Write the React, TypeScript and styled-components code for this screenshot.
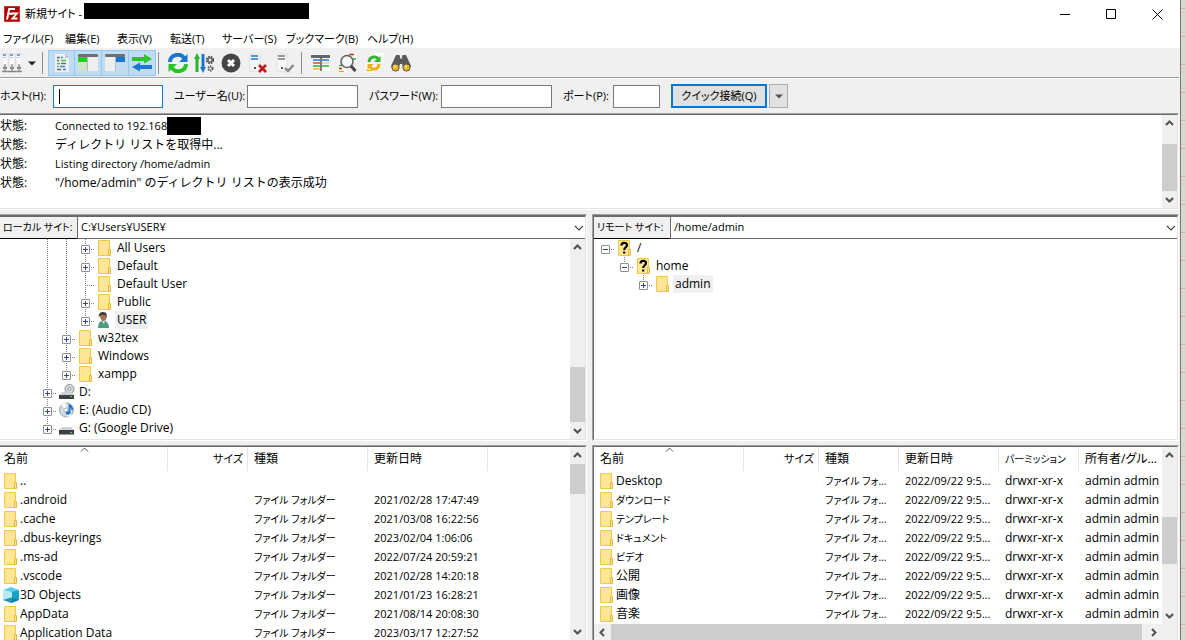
import React from "react";
import styled, { createGlobalStyle, css } from "styled-components";

const GlobalStyle = createGlobalStyle`
  *, *::before, *::after { box-sizing: border-box; }
  body { margin: 0; background: #dad7ce; }
  button, input, select { font: inherit; color: inherit; margin: 0; }
`;

const Desktop = styled.div`
  display: flex;
  height: 100vh;
  overflow: hidden;
  font-family: "Open Sans", "Noto Sans CJK JP", sans-serif;
  font-size: 12px;
  line-height: 18px;
  color: #000;
  font-feature-settings: "palt";
`;

const Window = styled.div`
  flex: 1;
  min-width: 0;
  display: flex;
  flex-direction: column;
  padding-right: 1px;
  background: #f0f0f0;
`;

const DesktopEdge = styled.div`
  flex: 0 0 5px;
  border-left: 1px solid #777;
  background: repeating-linear-gradient(to bottom, #dad7ce 0 8px, #c9b8b2 8px 9px, #dad7ce 9px 28px);
`;

const TitleBar = styled.header`
  flex: 0 0 28px;
  display: flex;
  margin-right: -1px;
  background: #fff;
`;

const Title = styled.h1`
  flex: 1;
  display: flex;
  align-items: center;
  margin: 0;
  padding-left: 4px;
  font-size: 11px;
  font-weight: 400;
  white-space: nowrap;
`;

const TitleText = styled.span`
  flex: 0 0 58px;
  margin: 0 1px 0 5px;
`;

const TitleMask = styled.span`
  width: 225px;
  height: 16px;
  margin-bottom: 6px;
  background: #000;
`;

const WindowButton = styled.button`
  width: 46px;
  border: 0;
  padding: 0;
  background: transparent;
  display: grid;
  place-items: center;
`;

const WindowButtons = styled.div`
  display: flex;
`;

const MenuBar = styled.nav`
  flex: 0 0 20px;
  display: flex;
  margin-right: -1px;
  padding-left: 3px;
  background: #fff;
`;

const MenuItem = styled.button<{ $width: number }>`
  width: ${(p) => p.$width}px;
  border: 0;
  padding: 2px 0 0;
  background: transparent;
  text-align: left;
  white-space: nowrap;
  font-size: 11px;
  line-height: 18px;
`;

const ToolBar = styled.div`
  flex: 0 0 31px;
  display: flex;
  align-items: center;
  border-bottom: 1px solid #fff;
  box-shadow: inset 0 -1px #a0a0a0;
`;

const ToolButton = styled.button<{ $on?: boolean; $width?: number }>`
  width: ${(p) => p.$width ?? 27}px;
  height: 26px;
  padding: 0;
  border: 1px solid transparent;
  background: transparent;
  display: grid;
  place-items: center;
  ${(p) =>
    p.$on &&
    css`
      border-color: #90c8f6;
      background: #c0dcf3;
      & + & { border-left-width: 0; }
    `}
`;

const ToolSeparator = styled.span`
  width: 1px;
  height: 22px;
  margin: 0 5px 0 2px;
  background: #8c8c8c;
`;

const QuickConnect = styled.form`
  flex: 0 0 34px;
  display: flex;
  align-items: center;
`;

const FieldLabel = styled.label<{ $width: number }>`
  width: ${(p) => p.$width}px;
  white-space: nowrap;
  font-size: 11px;
`;

const TextField = styled.input<{ $width: number; $active?: boolean }>`
  width: ${(p) => p.$width}px;
  height: 23px;
  margin-right: 11px;
  padding: 0 5px;
  border: 1px solid ${(p) => (p.$active ? "#0078d7" : "#7a7a7a")};
  border-radius: 0;
  outline: 0;
  background: #fff;
  ${(p) =>
    p.$active &&
    css`
      caret-color: transparent;
      background: linear-gradient(#000, #000) 5px 50% / 1px 15px no-repeat #fff;
    `}
`;

const ConnectButton = styled.button`
  width: 96px;
  height: 24px;
  padding: 0;
  border: 2px solid #0078d7;
  background: #e1e1e1;
  font-size: 11px;
  white-space: nowrap;
`;

const HistoryButton = styled.button`
  width: 19px;
  height: 24px;
  margin-left: 2px;
  padding: 0;
  border: 1px solid #adadad;
  background: #e1e1e1;
  display: grid;
  place-items: center;
`;

const Panel = styled.section<{ $inset?: boolean; $open?: boolean }>`
  min-width: 0;
  min-height: 0;
  display: flex;
  flex-direction: column;
  border-top: 1px solid #a0a0a0;
  border-right: 1px solid #fff;
  border-bottom: ${(p) => (p.$open ? "0" : "1px solid #fff")};
  border-left: ${(p) => (p.$inset ? "1px solid #a0a0a0" : "0")};
`;

const PanelInner = styled.div<{ $inset?: boolean; $open?: boolean }>`
  flex: 1;
  min-height: 0;
  display: flex;
  overflow: hidden;
  border-top: 1px solid #696969;
  border-right: 1px solid #e3e3e3;
  border-bottom: ${(p) => (p.$open ? "0" : "1px solid #e3e3e3")};
  border-left: ${(p) => (p.$inset ? "1px solid #696969" : "0")};
  background: #fff;
`;

const LogPanel = styled(Panel)`
  flex: 0 0 97px;
`;

const LogTable = styled.table`
  flex: 1;
  align-self: flex-start;
  margin-top: 1px;
  border-collapse: collapse;
  font-feature-settings: normal;
  th, td { padding: 0; height: 19px; text-align: left; font-weight: 400; white-space: nowrap; }
  th { width: 55px; font-size: 12px; }
`;

const LogText = styled.div<{ $small: boolean }>`
  display: flex;
  align-items: center;
  font-size: ${(p) => (p.$small ? 11 : 12)}px;
`;

const LogMask = styled.span`
  width: 34px;
  height: 18px;
  background: #000;
`;

const Panes = styled.main`
  flex: 1;
  min-height: 0;
  margin-top: 4px;
  display: grid;
  grid-template-columns: minmax(0, 1fr) minmax(0, 1fr);
  grid-template-rows: 227px minmax(0, 1fr);
  gap: 4px 5px;
`;

const PathBar = styled.div<{ $inset?: boolean }>`
  flex: 0 0 24px;
  display: flex;
  border-top: 2px solid #696969;
  border-right: 1px solid #e3e3e3;
  border-left: ${(p) => (p.$inset ? "1px solid #696969" : "0")};
`;

const PathLabel = styled.label<{ $width: number }>`
  flex: 0 0 ${(p) => p.$width}px;
  padding: 1px 0 0 3px;
  border-bottom: 1px solid #000;
  white-space: nowrap;
  font-size: 10px;
`;

const PathBox = styled.div`
  flex: 1;
  position: relative;
  border-left: 1px solid #696969;
  border-bottom: 1px solid #696969;
  background: #fff;
  svg { position: absolute; right: 1px; top: 8px; pointer-events: none; }
`;

const PathSelect = styled.select`
  width: 100%;
  height: 20px;
  padding: 0 20px 0 3px;
  border: 0;
  outline: 0;
  appearance: none;
  background: transparent;
  font-size: 11px;
`;

const TreeInner = styled(PanelInner)`
  border-top: 0;
`;

const Tree = styled.ul<{ $indent: number }>`
  flex: 1;
  margin: 0;
  padding: 0 0 0 ${(p) => p.$indent}px;
  list-style: none;
`;

const TreeRow = styled.li`
  display: flex;
  height: 18px;
`;

const dotsDown = "repeating-linear-gradient(to bottom, #808080 0 1px, transparent 1px 2px)";
const dotsRight = "repeating-linear-gradient(to right, #808080 0 1px, transparent 1px 2px)";

const Guide = styled.span<{ $line: boolean }>`
  width: 19px;
  background: ${(p) => (p.$line ? `${dotsDown} 9px 0 / 1px 100% no-repeat` : "none")};
`;

const Branch = styled.span<{ $rise: string }>`
  width: 19px;
  padding-top: 2px;
  display: grid;
  place-items: center;
  background: ${dotsDown} 9px 0 / 1px ${(p) => p.$rise} no-repeat, ${dotsRight} 9px 10px / 10px 1px no-repeat;
`;

const Expander = styled.button`
  width: 9px;
  height: 9px;
  padding: 0;
  border: 1px solid #8f8f8f;
  border-radius: 1px;
  background: #fff;
  display: grid;
  place-items: center;
`;

const TreeIcon = styled.span`
  width: 20px;
  padding: 1px 0 0 2px;
  line-height: 0;
`;

const TreeLabel = styled.span<{ $selected?: boolean }>`
  padding: 0 2px;
  white-space: nowrap;
  background: ${(p) => (p.$selected ? "#f0f0f0" : "transparent")};
`;

const ListColumn = styled.div`
  flex: 1;
  min-width: 0;
  display: flex;
  flex-direction: column;
`;

const ListTop = styled.div`
  flex: 1;
  min-height: 0;
  display: flex;
`;

const ListArea = styled.div`
  flex: 1;
  min-width: 0;
  overflow: hidden;
`;

const FileTable = styled.table`
  width: 0;
  table-layout: fixed;
  border-collapse: separate;
  border-spacing: 0;
`;

const HeadCell = styled.th<{ $right?: boolean; $pad: number; $size: number }>`
  position: relative;
  height: 24px;
  padding: 0 4px 0 ${(p) => p.$pad}px;
  border-right: 1px solid #e5e5e5;
  font-size: ${(p) => p.$size}px;
  font-weight: 400;
  white-space: nowrap;
  text-align: ${(p) => (p.$right ? "right" : "left")};
  svg { position: absolute; top: 0; left: 50%; margin-left: -4px; }
`;

const Cell = styled.td<{ $pad: number; $size: number }>`
  height: 19px;
  padding: 0 0 0 ${(p) => p.$pad}px;
  white-space: nowrap;
  font-size: ${(p) => p.$size}px;
  line-height: 14px;
`;

const FileName = styled.span`
  display: flex;
  align-items: center;
  height: 19px;
  svg { flex: none; margin-right: 1px; }
`;

const Bar = styled.div<{ $horizontal?: boolean }>`
  flex: 0 0 ${(p) => (p.$horizontal ? 16 : 15)}px;
  display: flex;
  flex-direction: ${(p) => (p.$horizontal ? "row" : "column")};
  background: #f0f0f0;
`;

const BarButton = styled.button`
  flex: 0 0 17px;
  padding: 0;
  border: 0;
  background: transparent;
  display: grid;
  place-items: center;
`;

const BarPart = styled.span<{ $grow: number; $thumb?: boolean }>`
  flex: ${(p) => p.$grow} 1 0;
  background: ${(p) => (p.$thumb ? "#cdcdcd" : "transparent")};
`;

const BarCorner = styled.div`
  display: flex;
  padding-right: 15px;
  background: #f0f0f0;
  > div { flex: 1; height: 16px; }
`;

const arrowPaths = {
  up: "M1 6 L4.500 2.500 L8 6",
  down: "M1 3 L4.500 6.500 L8 3",
  left: "M6 1 L2.500 4.500 L6 8",
  right: "M3 1 L6.500 4.500 L3 8",
};

const Arrow = ({ dir }: { dir: keyof typeof arrowPaths }) => (
  <svg width="9" height="9" viewBox="0 0 9 9">
    <path d={arrowPaths[dir]} fill="none" stroke="#505050" strokeWidth="2" />
  </svg>
);

function ScrollBar({ parts, horizontal }: { parts: [number, number, number]; horizontal?: boolean }) {
  return (
    <Bar $horizontal={horizontal}>
      <BarButton type="button" aria-label={horizontal ? "左へ" : "上へ"}>
        <Arrow dir={horizontal ? "left" : "up"} />
      </BarButton>
      <BarPart $grow={parts[0]} />
      <BarPart $grow={parts[1]} $thumb />
      <BarPart $grow={parts[2]} />
      <BarButton type="button" aria-label={horizontal ? "右へ" : "下へ"}>
        <Arrow dir={horizontal ? "right" : "down"} />
      </BarButton>
    </Bar>
  );
}

const Caret = ({ color = "#222" }: { color?: string }) => (
  <svg width="8" height="5" viewBox="0 0 8 5">
    <path d="M0 0.500 H8 L4 4.500 Z" fill={color} />
  </svg>
);

const Chevron = () => (
  <svg width="10" height="6" viewBox="0 0 10 6">
    <path d="M1 1 L5 5 L9 1" fill="none" stroke="#444" strokeWidth="1.100" />
  </svg>
);

const SortMark = () => (
  <svg width="9" height="5" viewBox="0 0 9 5">
    <path d="M1 4.500 L4.500 1 L8 4.500" fill="none" stroke="#555" />
  </svg>
);

type IconName = "folder" | "unknown" | "user" | "cd" | "drive" | "optical" | "cube";

function ItemIcon({ name }: { name: IconName }) {
  return (
    <svg width="16" height="16" viewBox="0 0 16 16">
      {(name === "folder" || name === "unknown") && (
        <>
          <path d="M1.500 .5 H12.500 V15.500 H1.500 Z" fill="#ffe694" stroke="#efc94f" />
          <path d="M11.500 9.500 H13.500 V15.500 H11.500 Z" fill="#ffe694" stroke="#e3b93c" />
        </>
      )}
      {name === "unknown" && (
        <path d="M4.500 5.500 C4.500 2 10 2 10 5 C10 7.500 7.200 7 7.200 10 M7.200 11.500 V13.500" fill="none" stroke="#000" strokeWidth="2.200" />
      )}
      {name === "user" && (
        <>
          <path d="M1 16 C1 11 3 9 6 8.500 C10 9 12 12 12 16 Z" fill="#4d9c80" />
          <path d="M5 9 L7 12 L8 8 Z" fill="#e7f3ee" />
          <path d="M3 3 C3 7 5 9 6.500 9 C9 9 10 6 9.500 3 Z" fill="#a5734f" />
          <path d="M2 5 C1 1 4 0 6 0 C10 0 10 3 9.500 5 L8 3 L4 3 Z" fill="#45403c" />
        </>
      )}
      {name === "optical" && (
        <>
          <circle cx="10.500" cy="5" r="4.500" fill="#d6d9dc" stroke="#8b8f94" />
          <circle cx="10.500" cy="5" r="1.500" fill="#fff" stroke="#8b8f94" />
          <path d="M3 8 H12 L15 11 H0 Z" fill="#cfd2d4" />
          <path d="M0 11 H15 V15 H0 Z" fill="#3c4044" />
          <path d="M11 12.500 H13" stroke="#46e05a" />
        </>
      )}
      {name === "drive" && (
        <>
          <path d="M3 7 H12 L15 10 H0 Z" fill="#cfd2d4" />
          <path d="M0 10 H15 V14.500 H0 Z" fill="#3c4044" />
          <path d="M11 12.500 H13" stroke="#46e05a" />
        </>
      )}
      {name === "cd" && (
        <>
          <circle cx="7.500" cy="8" r="7" fill="#d3dae0" stroke="#9aa3ab" />
          <path d="M7.500 8 L2 3 A7.500 7.500 0 0 1 7 .8 Z M7.500 8 L13 13 A7 7 0 0 1 8 15 Z" fill="#f6f9fb" />
          <circle cx="7" cy="8" r="2" fill="#fff" stroke="#a9b2ba" />
          <path d="M10.500 11 V2.500 C11 4.500 14 5 13 8" fill="none" stroke="#1b74c5" strokeWidth="1.800" />
          <ellipse cx="9" cy="11" rx="2.500" ry="1.800" fill="#1b74c5" />
        </>
      )}
      {name === "cube" && (
        <>
          <path d="M0 3 L8 0 L16 3 L9 5.500 Z" fill="#58cfe6" />
          <path d="M0 3 L9 5 V16 L0 13 Z" fill="#b5ecf4" />
          <path d="M9 5 L16 3 V13 L9 16 Z" fill="#12a2c6" />
          <path d="M0 13 L8 10.500 L16 13 L8 16 Z" fill="#087c9d" opacity=".8" />
        </>
      )}
    </svg>
  );
}

const AppLogo = () => (
  <svg width="16" height="16" viewBox="0 0 16 16">
    <rect width="16" height="16" fill="#b30000" />
    <rect x=".5" y=".5" width="15" height="15" fill="none" stroke="#d66" strokeDasharray="1 1" />
    <path d="M3 13.500 L5.200 3 H11 M4 7.800 H8.500" fill="none" stroke="#fff" strokeWidth="2" />
    <path d="M8 7.500 H13 L8.500 12.500 H13.500" fill="none" stroke="#fff" strokeWidth="1.800" />
  </svg>
);

const toolArt: Record<string, React.ReactNode> = {
  sites: (
    <>
      {[0, 7, 14].map((x) => (
        <g key={x}>
          <path d={`M${x} 1 H${x + 6} V13 H${x} Z`} fill="#fafafa" stroke="#ccc" strokeWidth=".6" />
          <path d={`M${x + 1} 2 H${x + 4}`} stroke="#4c93d9" strokeWidth="1.600" />
          <path d={`M${x + 1} 4.500 H${x + 4}`} stroke="#a9cdf0" />
          <path d={`M${x + 3} 11 V18`} stroke="#999" strokeWidth="1.500" />
          <path d={`M${x + 1} 15 H${x + 5}`} stroke="#888" strokeWidth="2" />
        </g>
      ))}
      <path d="M0 18.500 H20" stroke="#888" strokeWidth="1.500" />
    </>
  ),
  log: (
    <>
      <path d="M3 1 H13 L17 5 V19 H3 Z" fill="#eef1f3" />
      <path d="M13 1 V5 H17 Z" fill="#b9c4cc" />
      <path d="M5 4.500 H8 M5 7.500 H7 M5 16.500 H9" stroke="#666" strokeWidth="1.400" />
      <path d="M9 4.500 H11 M8 13.500 H13 M11 16.500 H14" stroke="#3c86d0" strokeWidth="1.400" />
      <path d="M9 7.500 H14 M5 10.500 H8 M5 13.500 H7" stroke="#50bb50" strokeWidth="1.400" />
      <path d="M9 10.500 H14" stroke="#666" strokeWidth="1.400" />
    </>
  ),
  localTree: (
    <>
      <rect y="2" width="20" height="16" fill="#eee" />
      <rect y="1" width="20" height="3" rx="1" fill="#707070" />
      <rect y="4" width="9" height="5" fill="#2c2" />
      <rect y="9" width="9" height="9" fill="#cde5c9" />
      <path d="M9.500 4 V18" stroke="#bbb" />
    </>
  ),
  remoteTree: (
    <>
      <rect y="2" width="20" height="16" fill="#eee" />
      <rect y="1" width="20" height="3" rx="1" fill="#707070" />
      <rect x="11" y="4" width="9" height="5" fill="#1976d2" />
      <rect x="11" y="9" width="9" height="9" fill="#c5dcf0" />
      <path d="M10.500 4 V18" stroke="#bbb" />
    </>
  ),
  queue: (
    <>
      <path d="M0 4 H12 V1 L20 6 L12 10.500 V8 H0 Z" fill="#29c429" />
      <path d="M20 12 H8 V9.500 L0 14 L8 18.500 V16 H20 Z" fill="#1b76d0" />
    </>
  ),
  refresh: (
    <>
      <path d="M2 9 C2 2 12 -1 16 5" fill="none" stroke="#1b76d0" strokeWidth="4" />
      <path d="M19.500 1 V9 H11 Z" fill="#1b76d0" />
      <path d="M18 11 C18 18 8 21 4 15" fill="none" stroke="#29c429" strokeWidth="4" />
      <path d="M.5 19 V11 H9 Z" fill="#29c429" />
    </>
  ),
  process: (
    <>
      <path d="M3 19 V4" stroke="#29b829" strokeWidth="3" />
      <path d="M0 6 L3 0 L6 6 Z" fill="#29b829" />
      <path d="M9 1 V16" stroke="#1b76d0" strokeWidth="3" />
      <path d="M6 14 L9 20 L12 14 Z" fill="#1b76d0" />
      <circle cx="16" cy="7" r="3" fill="none" stroke="#555" strokeWidth="2.500" strokeDasharray="1.600 .8" />
      <circle cx="16" cy="7" r="2" fill="none" stroke="#555" />
      <circle cx="16.500" cy="15.500" r="2" fill="none" stroke="#555" strokeWidth="2" strokeDasharray="1.300 .7" />
    </>
  ),
  cancel: (
    <>
      <circle cx="10" cy="10" r="9.500" fill="#454545" />
      <path d="M7 7 L13 13 M13 7 L7 13" stroke="#fff" strokeWidth="3" />
    </>
  ),
  disconnect: (
    <>
      <rect x="2" y="1" width="10" height="17" fill="#f8f8f8" stroke="#d0d0d0" strokeWidth=".6" />
      <path d="M3 3 H10 M3 6 H10" stroke="#1b76d0" strokeWidth="1.300" />
      <path d="M6 15 H8" stroke="#555" strokeWidth="2" />
      <path d="M11 12 L18 19 M18 12 L11 19" stroke="#c4161c" strokeWidth="2.600" />
    </>
  ),
  reconnect: (
    <>
      <rect x="2" y="1" width="10" height="17" fill="#f8f8f8" stroke="#d0d0d0" strokeWidth=".6" />
      <path d="M3 3 H10 M3 6 H10" stroke="#777" strokeWidth="1.300" />
      <path d="M6 15 H8" stroke="#555" strokeWidth="2" />
      <path d="M10 15 L13 18 L18.500 12" fill="none" stroke="#888" strokeWidth="2.400" />
    </>
  ),
  filter: (
    <>
      <rect x="1" y="2" width="18" height="16" fill="#fafafa" />
      <path d="M0 3.500 H19" stroke="#666" strokeWidth="3" />
      <path d="M2 7 H9 M11 7 H18" stroke="#1b76d0" strokeWidth="1.300" />
      <path d="M2 10 H9" stroke="#d22" strokeWidth="1.300" />
      <path d="M2 13 H9 M11 13 H18" stroke="#29b829" strokeWidth="1.300" />
      <path d="M2 16 H9" stroke="#e9b200" strokeWidth="1.300" />
      <path d="M11 10 H18" stroke="#bbb" />
      <path d="M10 4 V18" stroke="#555" strokeWidth="1.500" />
    </>
  ),
  search: (
    <>
      <path d="M11 0 H20 V10 H11 Z M1 10 H10 V20 H1 Z" fill="#fafafa" />
      <path d="M12 1.500 H17 M2 15.500 H5" stroke="#d22" strokeWidth="1.300" />
      <path d="M2 12.500 H5 M16 6 H19" stroke="#29b829" strokeWidth="1.300" />
      <path d="M2 18.500 H7" stroke="#e9b200" strokeWidth="1.300" />
      <circle cx="10" cy="8.500" r="6" fill="#f5f5f5" stroke="#666" strokeWidth="1.600" />
      <path d="M14 13 L18.500 18" stroke="#444" strokeWidth="3" />
    </>
  ),
  sync: (
    <>
      <path d="M11 0 H20 V10 H11 Z M1 10 H10 V20 H1 Z" fill="#fafafa" />
      <path d="M2 17.500 H8" stroke="#e9b200" strokeWidth="1.200" />
      <path d="M5 9 C5 4 12 2 14 6" fill="none" stroke="#29b829" strokeWidth="2.800" />
      <path d="M16.500 3 V9 H10 Z" fill="#29b829" />
      <path d="M15 11 C15 16 9 18 6.500 14" fill="none" stroke="#f0ab0c" strokeWidth="2.800" />
      <path d="M3.500 17 V11 H10 Z" fill="#f0ab0c" />
    </>
  ),
  find: (
    <>
      <path d="M5 2 H8.500 L9.500 6 H10.500 L11.500 2 H15 L20 13 L17 18 H13 L11 11 H9 L7 18 H3 L0 13 Z" fill="#5b5b5b" />
      <circle cx="4.500" cy="14.500" r="3.600" fill="#f6b318" stroke="#555" />
      <circle cx="15.500" cy="14.500" r="3.600" fill="#f6b318" stroke="#555" />
      <circle cx="4" cy="13.500" r="1.200" fill="#ffe58a" />
      <circle cx="15" cy="13.500" r="1.200" fill="#ffe58a" />
    </>
  ),
};

function Tool({ icon, label, on, width }: { icon: string; label: string; on?: boolean; width?: number }) {
  return (
    <ToolButton type="button" aria-label={label} aria-pressed={on} $on={on} $width={width}>
      <svg width="20" height="20" viewBox="0 0 20 20">
        {toolArt[icon]}
      </svg>
    </ToolButton>
  );
}

const menus: [string, number][] = [
  ["ファイル(F)", 62],
  ["編集(E)", 52],
  ["表示(V)", 53],
  ["転送(T)", 52],
  ["サーバー(S)", 64],
  ["ブックマーク(B)", 81],
  ["ヘルプ(H)", 60],
];

type Node = {
  label: string;
  icon: IconName;
  guides: boolean[];
  rise: string;
  box?: "plus" | "minus";
  selected?: boolean;
};

const localTree: Node[] = [
  { label: "All Users", icon: "folder", guides: [true, true], rise: "100%", box: "plus" },
  { label: "Default", icon: "folder", guides: [true, true], rise: "100%", box: "plus" },
  { label: "Default User", icon: "folder", guides: [true, true], rise: "100%" },
  { label: "Public", icon: "folder", guides: [true, true], rise: "100%", box: "plus" },
  { label: "USER", icon: "user", guides: [true, true], rise: "50%", box: "plus", selected: true },
  { label: "w32tex", icon: "folder", guides: [true], rise: "100%", box: "plus" },
  { label: "Windows", icon: "folder", guides: [true], rise: "100%", box: "plus" },
  { label: "xampp", icon: "folder", guides: [true], rise: "50%", box: "plus" },
  { label: "D:", icon: "optical", guides: [], rise: "100%", box: "plus" },
  { label: "E: (Audio CD)", icon: "cd", guides: [], rise: "100%", box: "plus" },
  { label: "G: (Google Drive)", icon: "drive", guides: [], rise: "50%", box: "plus" },
];

const remoteTree: Node[] = [
  { label: "/", icon: "unknown", guides: [], rise: "0", box: "minus" },
  { label: "home", icon: "unknown", guides: [false], rise: "50%", box: "minus" },
  { label: "admin", icon: "folder", guides: [false, false], rise: "50%", box: "plus", selected: true },
];

function TreeView({ nodes, indent }: { nodes: Node[]; indent: number }) {
  return (
    <Tree $indent={indent}>
      {nodes.map((n) => (
        <TreeRow key={n.label}>
          {n.guides.map((line, i) => (
            <Guide key={i} $line={line} />
          ))}
          <Branch $rise={n.rise}>
            {n.box && (
              <Expander type="button" aria-label={n.label}>
                <svg width="7" height="7" viewBox="0 0 7 7">
                  <path d={n.box === "plus" ? "M1 3.500 H6 M3.500 1 V6" : "M1 3.500 H6"} stroke="#2b4a9b" />
                </svg>
              </Expander>
            )}
          </Branch>
          <TreeIcon>
            <ItemIcon name={n.icon} />
          </TreeIcon>
          <TreeLabel $selected={n.selected}>{n.label}</TreeLabel>
        </TreeRow>
      ))}
    </Tree>
  );
}

type Column = { title: string; width: number; right?: boolean; size?: number };

const localColumns: Column[] = [
  { title: "名前", width: 168 },
  { title: "サイズ", width: 80, right: true, size: 11 },
  { title: "種類", width: 120 },
  { title: "更新日時", width: 120 },
];

const remoteColumns: Column[] = [
  { title: "名前", width: 150 },
  { title: "サイズ", width: 75, right: true, size: 11 },
  { title: "種類", width: 80 },
  { title: "更新日時", width: 100 },
  { title: "パーミッション", width: 80, size: 10 },
  { title: "所有者/グル...", width: 84, size: 12 },
];

/* Text size of each column after the name: size, type, date, permissions, owner. */
const cellSizes = [12, 10, 11, 12, 12];

type FileRow = { name: string; icon?: IconName; cells: string[] };

const localFile = (name: string, date: string, icon?: IconName): FileRow => ({
  name,
  icon,
  cells: ["", "ファイル フォルダー", date],
});

const localFiles: FileRow[] = [
  { name: "..", cells: ["", "", ""] },
  localFile(".android", "2021/02/28 17:47:49"),
  localFile(".cache", "2021/03/08 16:22:56"),
  localFile(".dbus-keyrings", "2023/02/04 1:06:06"),
  localFile(".ms-ad", "2022/07/24 20:59:21"),
  localFile(".vscode", "2021/02/28 14:20:18"),
  localFile("3D Objects", "2021/01/23 16:28:21", "cube"),
  localFile("AppData", "2021/08/14 20:08:30"),
  localFile("Application Data", "2023/03/17 12:27:52"),
];

const remoteFiles: FileRow[] = [
  "Desktop",
  "ダウンロード",
  "テンプレート",
  "ドキュメント",
  "ビデオ",
  "公開",
  "画像",
  "音楽",
].map((name) => ({
  name,
  cells: ["", "ファイル フォ...", "2022/09/22 9:5...", "drwxr-xr-x", "admin admin"],
}));

const isKatakana = (text: string) => /^[\u30a0-\u30ff]+$/.test(text);

function FileList({ columns, files, pad }: { columns: Column[]; files: FileRow[]; pad: number }) {
  return (
    <FileTable>
      <colgroup>
        {columns.map((c) => (
          <col key={c.title} width={c.width} />
        ))}
      </colgroup>
      <thead>
        <tr>
          {columns.map((c, i) => (
            <HeadCell key={c.title} $right={c.right} $pad={i ? 6 : pad + 1} $size={c.size ?? 12}>
              {i === 0 && <SortMark />}
              {c.title}
            </HeadCell>
          ))}
        </tr>
      </thead>
      <tbody>
        {files.map((f) => (
          <tr key={f.name}>
            <Cell $pad={pad} $size={isKatakana(f.name) ? 10 : 12}>
              <FileName>
                <ItemIcon name={f.icon ?? "folder"} />
                {f.name}
              </FileName>
            </Cell>
            {f.cells.map((text, i) => (
              <Cell key={i} $pad={6} $size={cellSizes[i]}>
                {text}
              </Cell>
            ))}
          </tr>
        ))}
      </tbody>
    </FileTable>
  );
}

function PathRow({ id, label, path, inset }: { id: string; label: string; path: string; inset?: boolean }) {
  return (
    <PathBar $inset={inset}>
      <PathLabel htmlFor={id} $width={inset ? 76 : 77}>{label}</PathLabel>
      <PathBox>
        <PathSelect id={id}>
          <option>{path}</option>
        </PathSelect>
        <Chevron />
      </PathBox>
    </PathBar>
  );
}

const log = ["Connected to 192.168", "ディレクトリ リストを取得中...", "Listing directory /home/admin", '"/home/admin" のディレクトリ リストの表示成功'];

export default function App() {
  return (
    <Desktop>
      <GlobalStyle />
      <Window>
        <TitleBar>
          <Title>
            <AppLogo />
            <TitleText>新規サイト -</TitleText>
            <TitleMask />
          </Title>
          <WindowButtons>
            <WindowButton type="button" aria-label="最小化">
              <svg width="11" height="11"><path d="M0 5.500 H10" stroke="#000" /></svg>
            </WindowButton>
            <WindowButton type="button" aria-label="最大化">
              <svg width="11" height="11"><path d="M.5 .5 H9.500 V9.500 H.5 Z" fill="none" stroke="#000" /></svg>
            </WindowButton>
            <WindowButton type="button" aria-label="閉じる">
              <svg width="11" height="11"><path d="M.5 .5 L10.500 10.500 M10.500 .5 L.5 10.500" stroke="#000" /></svg>
            </WindowButton>
          </WindowButtons>
        </TitleBar>
        <MenuBar>
          {menus.map(([label, width]) => (
            <MenuItem key={label} type="button" $width={width}>{label}</MenuItem>
          ))}
        </MenuBar>
        <ToolBar>
          <Tool icon="sites" label="サイトマネージャー" width={24} />
          <ToolButton type="button" aria-label="サイト一覧" $width={16}>
            <Caret />
          </ToolButton>
          <ToolSeparator />
          <Tool icon="log" label="メッセージログ" on />
          <Tool icon="localTree" label="ローカルツリー" on />
          <Tool icon="remoteTree" label="リモートツリー" on />
          <Tool icon="queue" label="転送キュー" on />
          <ToolSeparator />
          <Tool icon="refresh" label="更新" />
          <Tool icon="process" label="キューの処理" />
          <Tool icon="cancel" label="中止" />
          <Tool icon="disconnect" label="切断" />
          <Tool icon="reconnect" label="再接続" />
          <ToolSeparator />
          <Tool icon="filter" label="フィルター" />
          <Tool icon="search" label="比較" />
          <Tool icon="sync" label="同期" />
          <Tool icon="find" label="検索" />
        </ToolBar>
        <QuickConnect>
          <FieldLabel htmlFor="host" $width={53}>ホスト(H):</FieldLabel>
          <TextField id="host" $width={110} $active />
          <FieldLabel htmlFor="user" $width={73}>ユーザー名(U):</FieldLabel>
          <TextField id="user" $width={111} />
          <FieldLabel htmlFor="pass" $width={72}>パスワード(W):</FieldLabel>
          <TextField id="pass" type="password" $width={111} />
          <FieldLabel htmlFor="port" $width={50}>ポート(P):</FieldLabel>
          <TextField id="port" $width={47} />
          <ConnectButton type="button">クイック接続(Q)</ConnectButton>
          <HistoryButton type="button" aria-label="履歴">
            <Caret color="#555" />
          </HistoryButton>
        </QuickConnect>
        <LogPanel>
          <PanelInner>
            <LogTable>
              <tbody>
                {log.map((text, i) => (
                  <tr key={text}>
                    <th scope="row">状態:</th>
                    <td>
                      <LogText $small={/^[\x20-\x7e]+$/.test(text)}>
                        {text}
                        {i === 0 && <LogMask />}
                      </LogText>
                    </td>
                  </tr>
                ))}
              </tbody>
            </LogTable>
            <ScrollBar parts={[12, 47, 0]} />
          </PanelInner>
        </LogPanel>
        <Panes>
          <Panel>
            <PathRow id="local-path" label="ローカル サイト:" path="C:¥Users¥USER¥" />
            <TreeInner>
              <TreeView nodes={localTree} indent={38} />
              <ScrollBar parts={[111, 55, 0]} />
            </TreeInner>
          </Panel>
          <Panel $inset>
            <PathRow id="remote-path" label="リモート サイト:" path="/home/admin" inset />
            <TreeInner $inset>
              <TreeView nodes={remoteTree} indent={2} />
            </TreeInner>
          </Panel>
          <Panel $open>
            <PanelInner $open>
              <ListArea>
                <FileList columns={localColumns} files={localFiles} pad={3} />
              </ListArea>
              <ScrollBar parts={[0, 30, 129]} />
            </PanelInner>
          </Panel>
          <Panel $inset $open>
            <PanelInner $inset $open>
              <ListColumn>
                <ListTop>
                  <ListArea>
                    <FileList columns={remoteColumns} files={remoteFiles} pad={5} />
                  </ListArea>
                  <ScrollBar parts={[53, 47, 43]} />
                </ListTop>
                <BarCorner>
                  <ScrollBar horizontal parts={[0, 530, 3]} />
                </BarCorner>
              </ListColumn>
            </PanelInner>
          </Panel>
        </Panes>
      </Window>
      <DesktopEdge />
    </Desktop>
  );
}
